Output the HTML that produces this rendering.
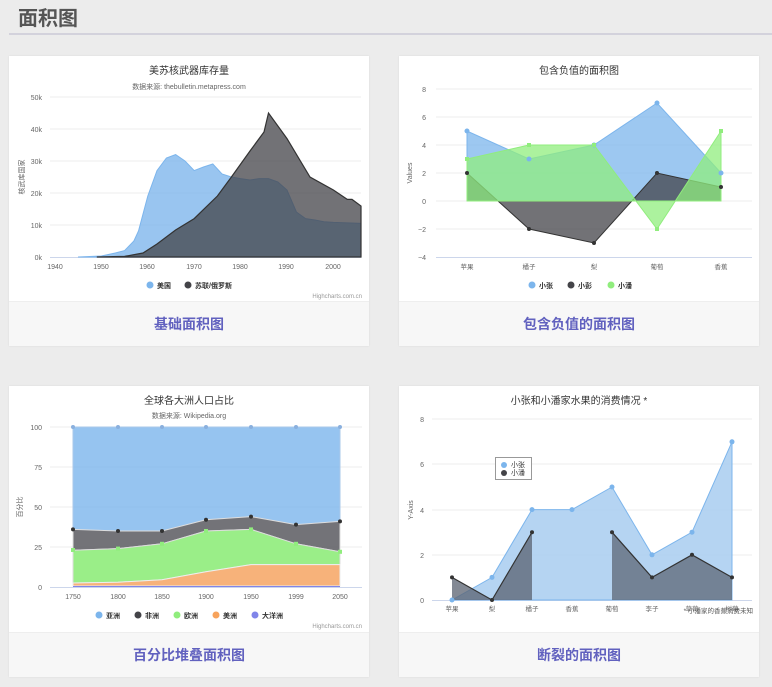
<!DOCTYPE html>
<html><head><meta charset="utf-8"><style>
body{margin:0;width:772px;height:687px;background:#ececec;font-family:"Liberation Sans","Noto Sans CJK SC",sans-serif;position:relative;overflow:hidden}
.h{position:absolute;left:18px;top:2px;font-size:20px;font-weight:bold;color:#555}
.line{position:absolute;left:9px;right:0;top:33px;height:2px;background:#d3d2dc}
.card{position:absolute;width:360px;background:#fff;box-shadow:0 0 2px rgba(0,0,0,.08)}
.foot{position:absolute;left:0;right:0;bottom:0;height:44px;background:#f7f7f7;border-top:1px solid #eee;text-align:center;line-height:44px;font-size:14px;font-weight:bold;color:#6161bf}
svg{position:absolute;left:0;top:0}
text{font-family:"Liberation Sans","Noto Sans CJK SC",sans-serif}
</style></head><body>
<div class="h">面积图</div><div class="line"></div>
<div class="card" style="left:9px;top:56px;height:290px"><div class="foot">基础面积图</div></div>
<div class="card" style="left:399px;top:56px;height:290px"><div class="foot">包含负值的面积图</div></div>
<div class="card" style="left:9px;top:386px;height:291px"><div class="foot">百分比堆叠面积图</div></div>
<div class="card" style="left:399px;top:386px;height:291px"><div class="foot">断裂的面积图</div></div>
<svg width="772" height="687" font-size="7" fill="#666">
<!-- Chart 1 -->
<text x="189" y="74" text-anchor="middle" font-size="10" fill="#333">美苏核武器库存量</text>
<text x="189" y="89" text-anchor="middle" font-size="7" fill="#666">数据来源: thebulletin.metapress.com</text>
<g stroke="#eee" stroke-width="1"><line x1="50" x2="361" y1="97" y2="97"/><line x1="50" x2="361" y1="129" y2="129"/><line x1="50" x2="361" y1="161" y2="161"/><line x1="50" x2="361" y1="193" y2="193"/><line x1="50" x2="361" y1="225" y2="225"/></g>
<line x1="50" x2="361" y1="257.5" y2="257.5" stroke="#ccd6eb"/>
<g text-anchor="end"><text x="42" y="100">50k</text><text x="42" y="132">40k</text><text x="42" y="164">30k</text><text x="42" y="196">20k</text><text x="42" y="228">10k</text><text x="42" y="260">0k</text></g>
<text transform="translate(24,177) rotate(-90)" text-anchor="middle">核武库国家</text>
<g text-anchor="middle"><text x="55" y="269">1940</text><text x="101" y="269">1950</text><text x="147" y="269">1960</text><text x="194" y="269">1970</text><text x="240" y="269">1980</text><text x="286" y="269">1990</text><text x="333" y="269">2000</text></g>
<path d="M78,257 L101.4,256 L115.3,253 L124.6,250.6 L133.9,241 L138.5,231 L147.8,196 L157,170.6 L166.4,158 L175.6,154.6 L185,161 L194.2,170.6 L203.5,167 L212.8,164 L222,174 L231.4,177 L240.6,178.6 L250,180 L259.2,178.6 L268.5,178.6 L277.8,182 L287,190 L296.4,212 L305.6,218.6 L315,220 L324,221.8 L333.4,222.4 L361,223.4 L361,257 Z" fill="#7cb5ec" fill-opacity=".78" stroke="#7cb5ec"/>
<path d="M96.8,257 L124.6,256.4 L143,253 L157,244 L175.6,230 L194.2,218.6 L217.4,196 L231.4,177 L250,151 L264,132 L268.5,113 L287,138.6 L310,177 L333.4,190 L347.3,199.4 L352,199.4 L361,206 L361,257 Z" fill="#434348" fill-opacity=".75" stroke="#333" stroke-width="1.2"/>
<circle cx="150" cy="285" r="3.5" fill="#7cb5ec"/><text x="157" y="288" fill="#333" font-weight="bold">美国</text>
<circle cx="188" cy="285" r="3.5" fill="#434348"/><text x="195" y="288" fill="#333" font-weight="bold">苏联/俄罗斯</text>
<text x="362" y="298" text-anchor="end" font-size="6" fill="#999">Highcharts.com.cn</text>
<!-- Chart 2 -->
<text x="579" y="74" text-anchor="middle" font-size="10" fill="#333">包含负值的面积图</text>
<g stroke="#eee"><line x1="436" x2="752" y1="89" y2="89"/><line x1="436" x2="752" y1="117" y2="117"/><line x1="436" x2="752" y1="145" y2="145"/><line x1="436" x2="752" y1="173" y2="173"/><line x1="436" x2="752" y1="201" y2="201"/><line x1="436" x2="752" y1="229" y2="229"/></g>
<line x1="436" x2="752" y1="257.5" y2="257.5" stroke="#ccd6eb"/>
<g text-anchor="end"><text x="426" y="92">8</text><text x="426" y="120">6</text><text x="426" y="148">4</text><text x="426" y="176">2</text><text x="426" y="204">0</text><text x="426" y="232">−2</text><text x="426" y="260">−4</text></g>
<text transform="translate(412,173) rotate(-90)" text-anchor="middle">Values</text>
<g text-anchor="middle" font-size="6.5"><text x="467" y="269">苹果</text><text x="529" y="269">橘子</text><text x="594" y="269">梨</text><text x="657" y="269">葡萄</text><text x="721" y="269">香蕉</text></g>
<path d="M467,201 L467,131 L529,159 L594,145 L657,103 L721,173 L721,201Z" fill="#7cb5ec" fill-opacity=".75" stroke="#7cb5ec"/>
<path d="M467,201 L467,173 L529,229 L594,243 L657,173 L721,187 L721,201Z" fill="#434348" fill-opacity=".75" stroke="#333"/>
<path d="M467,201 L467,159 L529,145 L594,145 L657,229 L721,131 L721,201Z" fill="#90ed7d" fill-opacity=".75" stroke="#90ed7d"/>
<g fill="#7cb5ec"><circle cx="467" cy="131" r="2.5"/><circle cx="529" cy="159" r="2.5"/><circle cx="594" cy="145" r="2.5"/><circle cx="657" cy="103" r="2.5"/><circle cx="721" cy="173" r="2.5"/></g>
<g fill="#333"><circle cx="467" cy="173" r="2"/><circle cx="529" cy="229" r="2"/><circle cx="594" cy="243" r="2"/><circle cx="657" cy="173" r="2"/><circle cx="721" cy="187" r="2"/></g>
<g fill="#90ed7d"><rect x="465" y="157" width="4" height="4"/><rect x="527" y="143" width="4" height="4"/><rect x="592" y="143" width="4" height="4"/><rect x="655" y="227" width="4" height="4"/><rect x="719" y="129" width="4" height="4"/></g>
<circle cx="532" cy="285" r="3.5" fill="#7cb5ec"/><text x="539" y="288" fill="#333" font-weight="bold">小张</text>
<circle cx="571" cy="285" r="3.5" fill="#434348"/><text x="578" y="288" fill="#333" font-weight="bold">小彭</text>
<circle cx="611" cy="285" r="3.5" fill="#90ed7d"/><text x="618" y="288" fill="#333" font-weight="bold">小潘</text>
<!-- Chart 3 -->
<text x="189" y="404" text-anchor="middle" font-size="10" fill="#333">全球各大洲人口占比</text>
<text x="189" y="418" text-anchor="middle" fill="#666">数据来源: Wikipedia.org</text>
<g stroke="#eee"><line x1="50" x2="362" y1="427" y2="427"/><line x1="50" x2="362" y1="467" y2="467"/><line x1="50" x2="362" y1="507" y2="507"/><line x1="50" x2="362" y1="547" y2="547"/></g>
<g text-anchor="end"><text x="42" y="430">100</text><text x="42" y="470">75</text><text x="42" y="510">50</text><text x="42" y="550">25</text><text x="42" y="590">0</text></g>
<text transform="translate(22,507) rotate(-90)" text-anchor="middle">百分比</text>
<g text-anchor="middle"><text x="73" y="599">1750</text><text x="118" y="599">1800</text><text x="162" y="599">1850</text><text x="206" y="599">1900</text><text x="251" y="599">1950</text><text x="296" y="599">1999</text><text x="340" y="599">2050</text></g>
<path d="M73,427 L340,427 L340,521.4 L296,524.6 L251,516.6 L206,519.8 L162,531 L118,531 L73,529.4Z" fill="#7cb5ec" fill-opacity=".8" stroke="#aac8ea"/>
<path d="M73,529.4 L118,531 L162,531 L206,519.8 L251,516.6 L296,524.6 L340,521.4 L340,551.8 L296,543.8 L251,529.4 L206,531 L162,543.8 L118,548.6 L73,550.2Z" fill="#5a5a60" fill-opacity=".85" stroke="#ddd"/>
<path d="M73,550.2 L118,548.6 L162,543.8 L206,531 L251,529.4 L296,543.8 L340,551.8 L340,564.6 L296,564.6 L251,564.6 L206,571.8 L162,579.8 L118,582.2 L73,583Z" fill="#9aee88" stroke="#ddd"/>
<path d="M73,583 L118,582.2 L162,579.8 L206,571.8 L251,564.6 L296,564.6 L340,564.6 L340,586 L73,586Z" fill="#f7b27a" stroke="#eee"/>
<path d="M73,586 L340,586 L340,587 L73,587Z" fill="#8085e9"/>
<line x1="50" x2="362" y1="587.5" y2="587.5" stroke="#ccd6eb"/>
<g fill="#8ab0de"><circle cx="73" cy="427" r="2"/><circle cx="118" cy="427" r="2"/><circle cx="162" cy="427" r="2"/><circle cx="206" cy="427" r="2"/><circle cx="251" cy="427" r="2"/><circle cx="296" cy="427" r="2"/><circle cx="340" cy="427" r="2"/></g>
<g fill="#333"><circle cx="73" cy="529.4" r="2"/><circle cx="118" cy="531" r="2"/><circle cx="162" cy="531" r="2"/><circle cx="206" cy="519.8" r="2"/><circle cx="251" cy="516.6" r="2"/><circle cx="296" cy="524.6" r="2"/><circle cx="340" cy="521.4" r="2"/></g>
<g fill="#90ed7d"><rect x="71" y="548" width="4" height="4"/><rect x="116" y="546.6" width="4" height="4"/><rect x="160" y="541.8" width="4" height="4"/><rect x="204" y="529" width="4" height="4"/><rect x="249" y="527.4" width="4" height="4"/><rect x="294" y="541.8" width="4" height="4"/><rect x="338" y="549.8" width="4" height="4"/></g>
<circle cx="99" cy="615" r="3.5" fill="#7cb5ec"/><text x="106" y="618" fill="#333" font-weight="bold">亚洲</text>
<circle cx="138" cy="615" r="3.5" fill="#434348"/><text x="145" y="618" fill="#333" font-weight="bold">非洲</text>
<circle cx="177" cy="615" r="3.5" fill="#90ed7d"/><text x="184" y="618" fill="#333" font-weight="bold">欧洲</text>
<circle cx="216" cy="615" r="3.5" fill="#f7a35c"/><text x="223" y="618" fill="#333" font-weight="bold">美洲</text>
<circle cx="255" cy="615" r="3.5" fill="#8085e9"/><text x="262" y="618" fill="#333" font-weight="bold">大洋洲</text>
<text x="362" y="628" text-anchor="end" font-size="6" fill="#999">Highcharts.com.cn</text>
<!-- Chart 4 -->
<text x="579" y="404" text-anchor="middle" font-size="10" fill="#333">小张和小潘家水果的消费情况 *</text>
<g stroke="#eee"><line x1="432" x2="752" y1="419" y2="419"/><line x1="432" x2="752" y1="464" y2="464"/><line x1="432" x2="752" y1="510" y2="510"/><line x1="432" x2="752" y1="555" y2="555"/></g>
<line x1="432" x2="752" y1="600.5" y2="600.5" stroke="#ccd6eb"/>
<g text-anchor="end"><text x="424" y="422">8</text><text x="424" y="467">6</text><text x="424" y="513">4</text><text x="424" y="558">2</text><text x="424" y="603">0</text></g>
<text transform="translate(413,510) rotate(-90)" text-anchor="middle">Y-Axis</text>
<g text-anchor="middle" font-size="6.5"><text x="452" y="611">苹果</text><text x="492" y="611">梨</text><text x="532" y="611">橘子</text><text x="572" y="611">香蕉</text><text x="612" y="611">葡萄</text><text x="652" y="611">李子</text><text x="692" y="611">草莓</text><text x="732" y="611">树莓</text></g>
<path d="M452,600 L492,577.4 L532,509.6 L572,509.6 L612,487 L652,554.8 L692,532.2 L732,441.8 L732,600Z" fill="#a8cdf0" fill-opacity=".85" stroke="#7cb5ec"/>
<path d="M452,600 L452,577.4 L492,600 L532,532.2 L532,600Z" fill="#5a6270" fill-opacity=".75"/>
<path d="M452,577.4 L492,600 L532,532.2" fill="none" stroke="#333" stroke-width="1.2"/>
<path d="M612,600 L612,532.2 L652,577.4 L692,554.8 L732,577.4 L732,600Z" fill="#5a6270" fill-opacity=".72"/>
<path d="M612,532.2 L652,577.4 L692,554.8 L732,577.4" fill="none" stroke="#333" stroke-width="1.2"/>
<g fill="#7cb5ec"><circle cx="452" cy="600" r="2.5"/><circle cx="492" cy="577.4" r="2.5"/><circle cx="532" cy="509.6" r="2.5"/><circle cx="572" cy="509.6" r="2.5"/><circle cx="612" cy="487" r="2.5"/><circle cx="652" cy="554.8" r="2.5"/><circle cx="692" cy="532.2" r="2.5"/><circle cx="732" cy="441.8" r="2.5"/></g>
<g fill="#333"><circle cx="452" cy="577.4" r="2"/><circle cx="492" cy="600" r="2"/><circle cx="532" cy="532.2" r="2"/><circle cx="612" cy="532.2" r="2"/><circle cx="652" cy="577.4" r="2"/><circle cx="692" cy="554.8" r="2"/><circle cx="732" cy="577.4" r="2"/></g>
<rect x="495.5" y="457.5" width="36" height="22" fill="#fff" stroke="#999"/>
<circle cx="504" cy="465" r="3" fill="#7cb5ec"/><text x="511" y="467" fill="#333">小张</text>
<circle cx="504" cy="473" r="3" fill="#434348"/><text x="511" y="475" fill="#333">小潘</text>
<text x="753" y="613" text-anchor="end" font-size="6.5" fill="#555">* 小潘家的香蕉消费未知</text>
</svg>
</body></html>
